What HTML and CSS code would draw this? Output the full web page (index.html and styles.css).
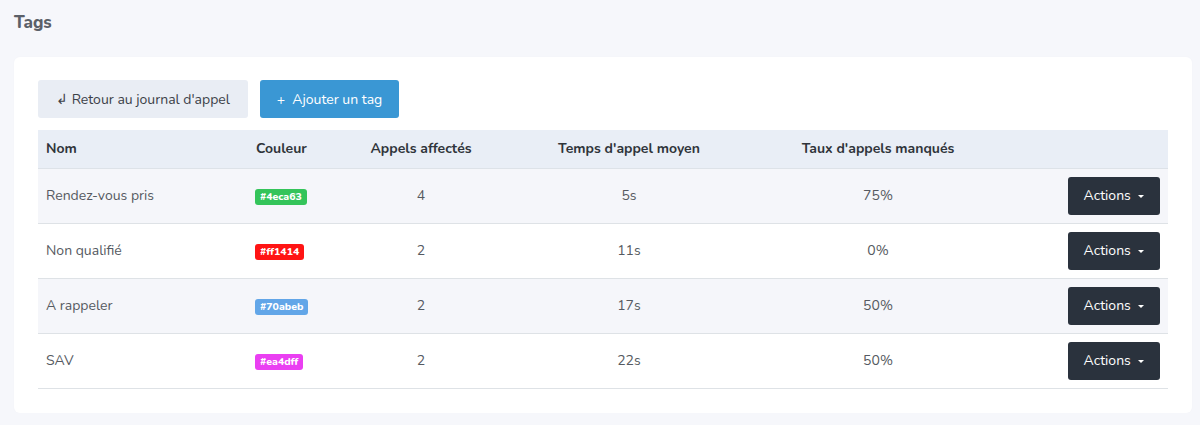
FILE: index.html
```html
<!DOCTYPE html>
<html lang="fr">
<head>
<meta charset="utf-8">
<title>Tags</title>
<link rel="stylesheet" href="styles.css">
</head>
<body>
<div class="page">
  <h1 class="title">Tags</h1>
  <div class="card">
    <div class="toolbar">
      <button class="btn btn-light">↲ Retour au journal d'appel</button>
      <button class="btn btn-primary">+&nbsp; Ajouter un tag</button>
    </div>
    <table class="table">
      <colgroup>
        <col class="c-nom"><col class="c-coul"><col class="c-app"><col class="c-temps"><col class="c-taux"><col class="c-act">
      </colgroup>
      <thead>
        <tr>
          <th>Nom</th>
          <th>Couleur</th>
          <th class="center">Appels affectés</th>
          <th class="center">Temps d'appel moyen</th>
          <th class="center">Taux d'appels manqués</th>
          <th></th>
        </tr>
      </thead>
      <tbody>
        <tr>
          <td>Rendez-vous pris</td>
          <td><span class="badge" style="background:#34c45a">#4eca63</span></td>
          <td class="center">4</td>
          <td class="center">5s</td>
          <td class="center">75%</td>
          <td class="right"><button class="btn btn-dark">Actions <span class="caret"></span></button></td>
        </tr>
        <tr>
          <td>Non qualifié</td>
          <td><span class="badge" style="background:#ff1414">#ff1414</span></td>
          <td class="center">2</td>
          <td class="center">11s</td>
          <td class="center">0%</td>
          <td class="right"><button class="btn btn-dark">Actions <span class="caret"></span></button></td>
        </tr>
        <tr>
          <td>A rappeler</td>
          <td><span class="badge" style="background:#62a6e8">#70abeb</span></td>
          <td class="center">2</td>
          <td class="center">17s</td>
          <td class="center">50%</td>
          <td class="right"><button class="btn btn-dark">Actions <span class="caret"></span></button></td>
        </tr>
        <tr>
          <td>SAV</td>
          <td><span class="badge" style="background:#ea3ff2">#ea4dff</span></td>
          <td class="center">2</td>
          <td class="center">22s</td>
          <td class="center">50%</td>
          <td class="right"><button class="btn btn-dark">Actions <span class="caret"></span></button></td>
        </tr>
      </tbody>
    </table>
  </div>
</div>
</body>
</html>
```
FILE: styles.css
```css
* { box-sizing: border-box; }
html, body {
  margin: 0;
  padding: 0;
  background: #f6f7fb;
  font-family: "Nunito", "Lato", "Open Sans", sans-serif;
  color: #50555c;
}
.page {
  padding: 11px 8px 0 14px;
}
.title {
  margin: 0 0 22px;
  font-size: 17px;
  font-weight: 800;
  color: #5b6068;
  line-height: 24px;
}
.card {
  background: #fff;
  border-radius: 6px;
  padding: 23px 24px 24px 24px;
  width: 1178px;
  box-shadow: 0 0 3px rgba(0,0,0,0.02);
}
.toolbar {
  display: flex;
  gap: 12px;
  margin-bottom: 12px;
}
.btn {
  font-family: inherit;
  font-size: 14px;
  border: none;
  border-radius: 3px;
  height: 38px;
  padding: 0 16px;
  cursor: pointer;
}
.btn-light {
  background: #e9edf4;
  color: #3c4148;
  width: 210px;
}
.btn-primary {
  background: #3a97d4;
  color: #fff;
  width: 139px;
}
.btn-dark {
  background: #2a323d;
  color: #fff;
  width: 92px;
  padding: 0;
}
.caret {
  display: inline-block;
  width: 0;
  height: 0;
  border-left: 3px solid transparent;
  border-right: 3px solid transparent;
  border-top: 3px solid #fff;
  vertical-align: middle;
  margin-left: 4px;
}
.table {
  width: 100%;
  border-collapse: collapse;
  table-layout: fixed;
  font-size: 14px;
}
.c-nom { width: 210px; }
.c-coul { width: 82px; }
.c-app { width: 182px; }
.c-temps { width: 234px; }
.c-taux { width: 264px; }
.c-act { width: auto; }
.table th {
  background: #e9eef6;
  color: #2f343a;
  font-weight: 700;
  text-align: left;
  height: 38px;
  padding: 0 8px;
  border-bottom: 1px solid #dde2e8;
}
.table td {
  height: 55px;
  padding: 0 8px;
  border-bottom: 1px solid #dee2e6;
  color: #555a61;
}
.table tbody tr:nth-child(odd) td {
  background: #f5f6fa;
}
.center { text-align: center !important; }
.right { text-align: right; }
.badge {
  display: inline-block;
  color: #fff;
  font-size: 10.5px;
  font-weight: 800;
  line-height: 16px;
  padding: 0 5px;
  border-radius: 3px;
  vertical-align: middle;
  margin-left: -1px;
}
```
